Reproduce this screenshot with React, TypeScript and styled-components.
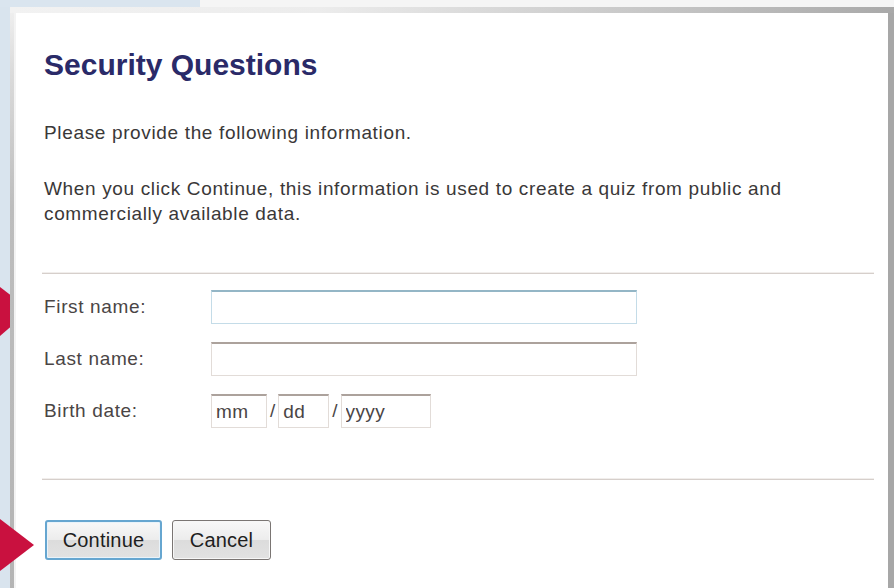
import React from 'react'
import styled, { createGlobalStyle } from 'styled-components'

const GlobalStyle = createGlobalStyle`
  html, body {
    margin: 0;
    padding: 0;
    background: #d9e4ee;
    overflow: hidden;
  }
  body {
    font-family: 'Liberation Sans', Arial, sans-serif;
  }
`

const Page = styled.div`
  position: relative;
  width: 894px;
  height: 588px;
  overflow: hidden;
  background: #d9e4ee;
`

const TopStrip = styled.div`
  display: flex;
  height: 7px;
`

const StripPart = styled.div<{ $tone: string; $width?: string }>`
  flex: ${(p) => (p.$width ? `0 0 ${p.$width}` : '1')};
  background: ${(p) => p.$tone};
`

const Frame = styled.div`
  position: relative;
  z-index: 1;
  margin-left: 10px;
  width: 884px;
  height: 600px;
  box-sizing: border-box;
  padding: 6px 6px 0 6px;
  background:
    linear-gradient(to right, #f2f2f2 0%, #ececec 35%, #c4c4c4 75%, #a9a9a9 100%) top / 100% 6px no-repeat,
    linear-gradient(#a7a7a7, #a7a7a7) right / 6px 100% no-repeat,
    linear-gradient(to bottom, #f0f0f0 0px, #dcdcdc 60px, #bdbdbd 200px, #b4b4b4 100%) left / 6px 100% no-repeat;
`

const Panel = styled.div`
  height: 100%;
  background: #ffffff;
  padding: 34px 14px 0 28px;
  box-sizing: border-box;
  border-left: 2px solid #f3f3f3;
  margin-left: -2px;
`

const Title = styled.h1`
  margin: 0;
  font-size: 30px;
  line-height: 36px;
  font-weight: 700;
  color: #2a2a68;
`

const Text = styled.p<{ $gap: number }>`
  margin: ${(p) => p.$gap}px 0 0;
  max-width: 800px;
  font-size: 19px;
  letter-spacing: 0.65px;
  line-height: 25px;
  color: #3a3838;
`

const Divider = styled.hr<{ $gap: number }>`
  margin: ${(p) => p.$gap}px 0 0 -2px;
  border: 0;
  height: 2px;
  background: linear-gradient(#f1eeec 0 1px, #d6cfcb 1px 2px);
`

const Form = styled.div`
  display: flex;
  flex-direction: column;
  gap: 18px;
  margin-top: 16px;
`

const Row = styled.div`
  display: flex;
  align-items: center;
  height: 34px;
`

const Label = styled.label`
  flex: 0 0 167px;
  font-size: 19px;
  letter-spacing: 0.65px;
  color: #4a4545;
`

const Field = styled.input<{ $w: number; $focus?: boolean }>`
  box-sizing: border-box;
  flex: 0 0 ${(p) => p.$w}px;
  width: ${(p) => p.$w}px;
  height: 34px;
  margin: 0;
  padding: 0 4px;
  font-family: 'Liberation Sans', Arial, sans-serif;
  font-size: 19px;
  letter-spacing: 0.4px;
  color: #4a4545;
  background: #ffffff;
  border: 1px solid ${(p) => (p.$focus ? '#c4dce8' : '#e2dcd8')};
  border-top: 2px solid ${(p) => (p.$focus ? '#94b6c6' : '#aca29c')};
  border-radius: 0;
  outline: none;
  &::placeholder {
    color: #4a4545;
  }
`

const Slash = styled.span`
  font-size: 19px;
  color: #4a4545;
  padding: 0 3px;
`

const Actions = styled.div`
  display: flex;
  gap: 10px;
  margin-top: 40px;
  margin-left: 1px;
`

const Button = styled.button<{ $primary?: boolean }>`
  box-sizing: border-box;
  height: 40px;
  width: ${(p) => (p.$primary ? '117px' : '99px')};
  padding: 0;
  font-family: 'Liberation Sans', Arial, sans-serif;
  font-size: 20px;
  letter-spacing: 0.2px;
  color: #1e1e1e;
  border-radius: 3px;
  border: ${(p) => (p.$primary ? '2px solid #66a6d0' : '1px solid #7a7573')};
  box-shadow: inset 0 0 0 1px ${(p) => (p.$primary ? '#e9f3fa' : '#f7f7f7')};
  background: linear-gradient(#f8f8f8 0%, #ececec 50%, #dcdcdc 51%, #e2e2e2 100%);
  cursor: pointer;
`

const Arrow = styled.svg<{ $top: number; $layer: number }>`
  position: absolute;
  left: 0;
  top: ${(p) => p.$top}px;
  z-index: ${(p) => p.$layer};
`

export default function App() {
  return (
    <Page>
      <GlobalStyle />
      <TopStrip>
        <StripPart $tone="#dae5ef" $width="200px" />
        <StripPart $tone="#f5f5f5" />
      </TopStrip>

      {/* pointer behind the frame, only its tip shows */}
      <Arrow $top={270} $layer={0} width="40" height="80" viewBox="0 0 40 80">
        <polygon points="0,17 30,40 0,66" fill="#c9113f" />
      </Arrow>

      <Frame>
        <Panel>
          <Title>Security Questions</Title>
          <Text $gap={37}>Please provide the following information.</Text>
          <Text $gap={31}>
            When you click Continue, this information is used to create a quiz from public and commercially available
            data.
          </Text>

          <Divider $gap={46} />

          <Form>
            <Row>
              <Label>First name:</Label>
              <Field $w={426} $focus />
            </Row>
            <Row>
              <Label>Last name:</Label>
              <Field $w={426} />
            </Row>
            <Row>
              <Label>Birth date:</Label>
              <Field $w={56} placeholder="mm" />
              <Slash>/</Slash>
              <Field $w={51} placeholder="dd" />
              <Slash>/</Slash>
              <Field $w={90} placeholder="yyyy" />
            </Row>
          </Form>

          <Divider $gap={50} />

          <Actions>
            <Button $primary>Continue</Button>
            <Button>Cancel</Button>
          </Actions>
        </Panel>
      </Frame>

      <Arrow $top={515} $layer={2} width="40" height="60" viewBox="0 0 40 60">
        <polygon points="0,4 34,30 0,56" fill="#c9113f" />
      </Arrow>
    </Page>
  )
}
